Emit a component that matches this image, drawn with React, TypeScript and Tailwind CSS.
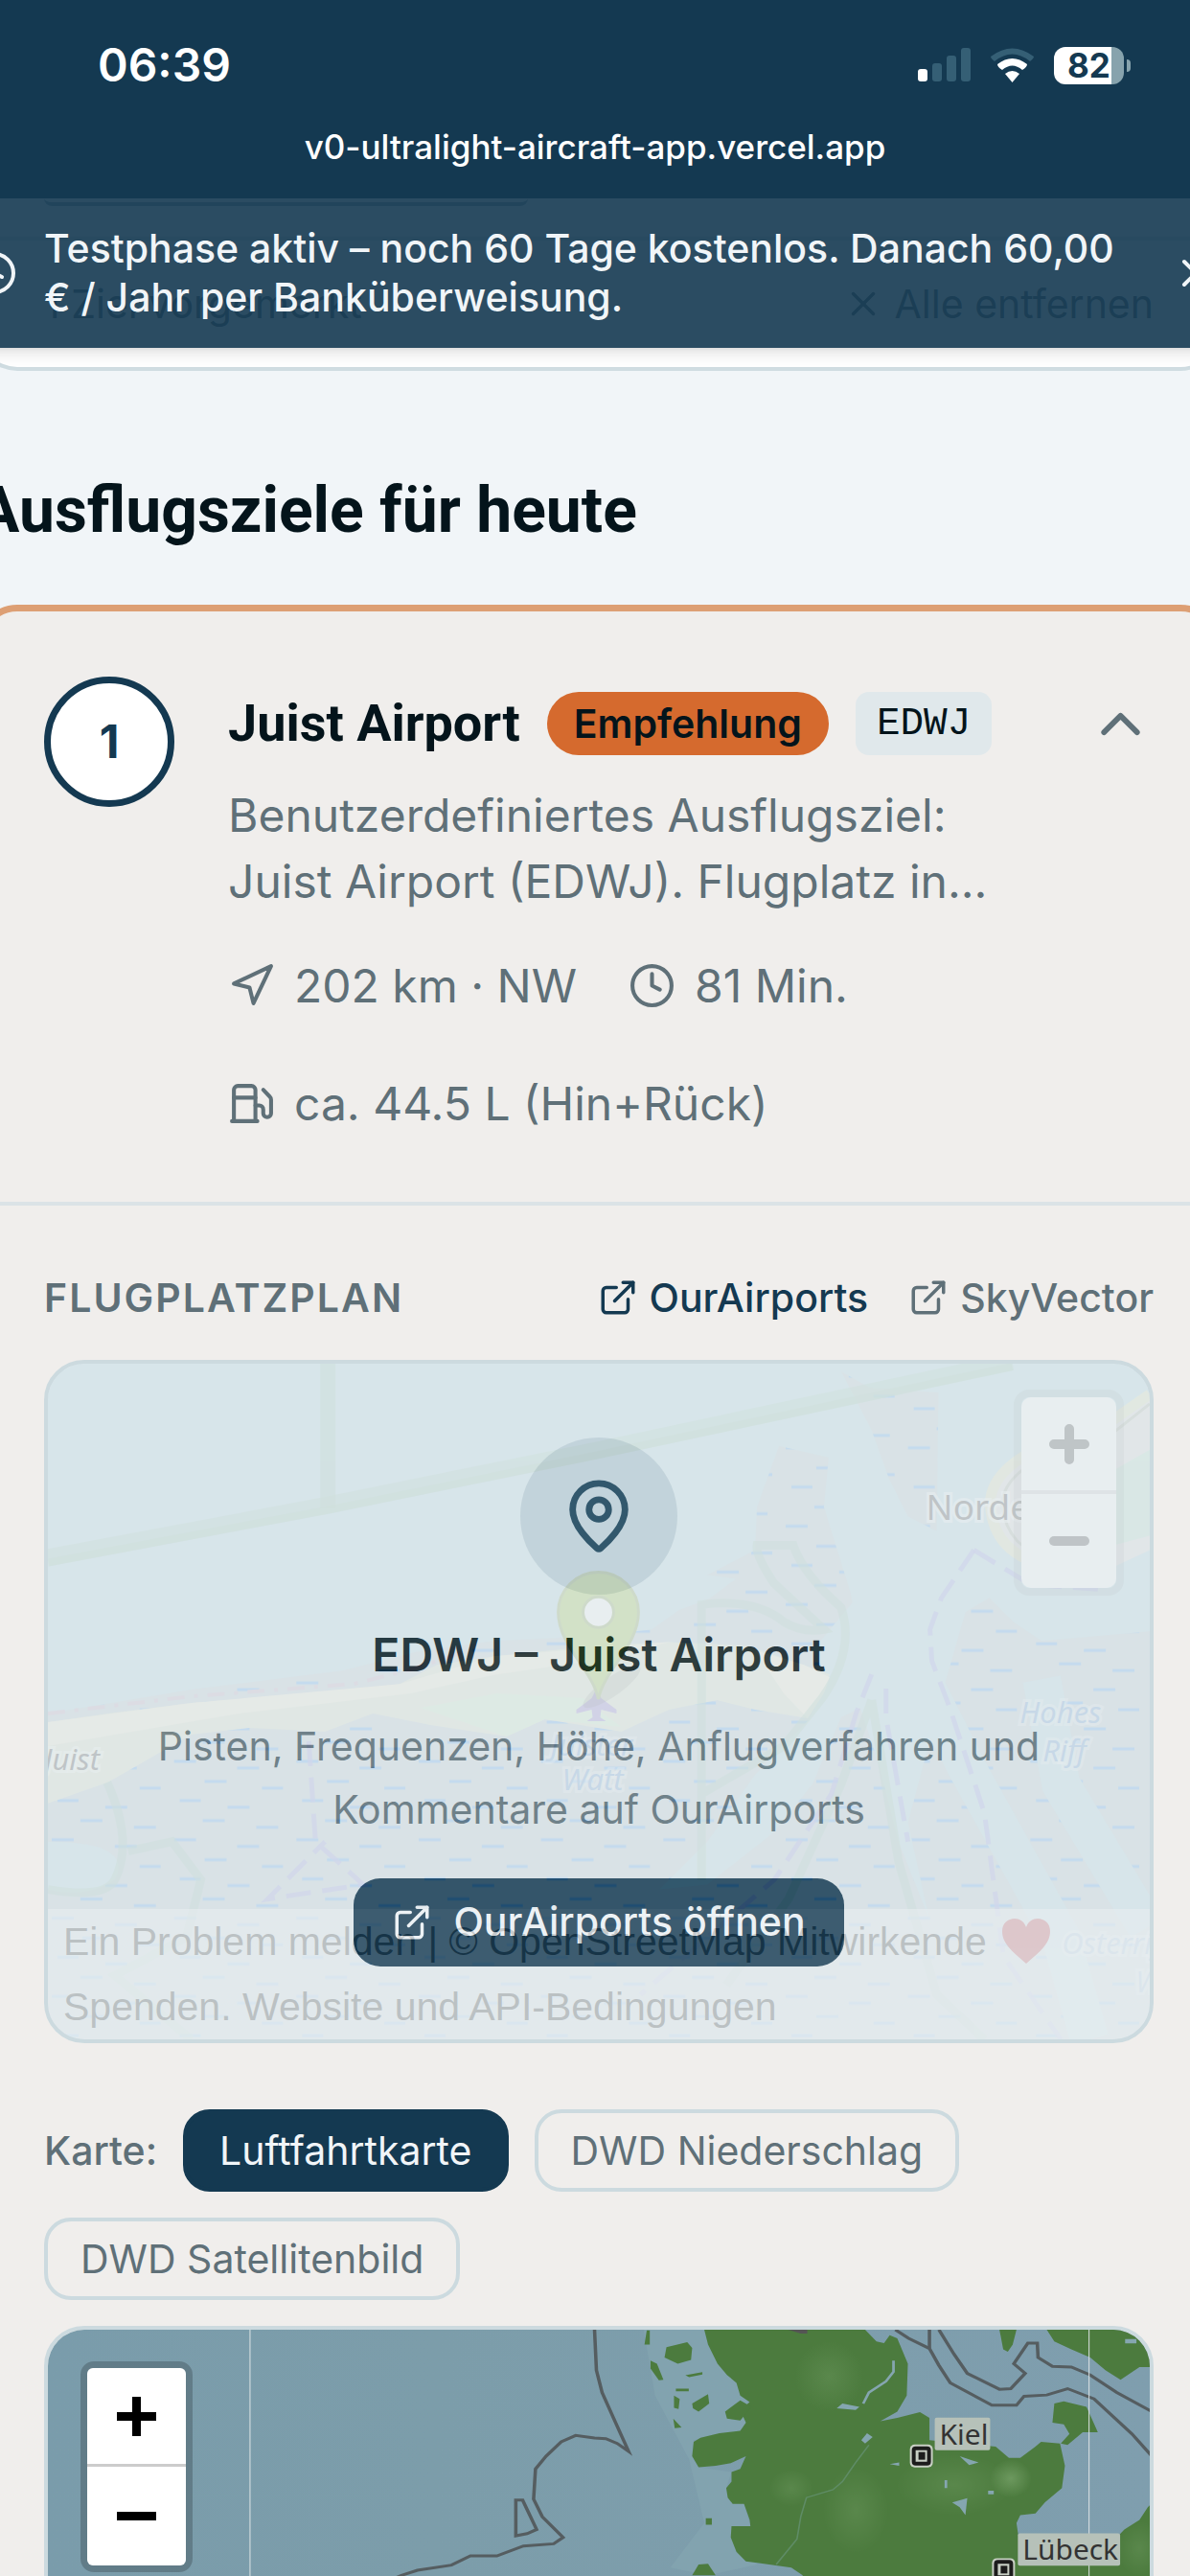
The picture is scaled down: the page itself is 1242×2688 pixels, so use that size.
import { ChevronUp, Clock, ExternalLink, Fuel, MapPin, Navigation, X } from 'lucide-react'

const StatusIcons = () => {
  return (
    <div className="flex items-center gap-5">
      <svg width="55" height="36" viewBox="0 0 55 36" aria-hidden="true">
        <rect x="0" y="22" width="10" height="13" rx="3" fill="#ffffff" />
        <rect x="15" y="16" width="10" height="19" rx="3" fill="#355f75" />
        <rect x="30" y="8" width="10" height="27" rx="3" fill="#355f75" />
        <rect x="45" y="0" width="10" height="35" rx="3" fill="#355f75" />
      </svg>
      <svg width="47" height="36" viewBox="0 0 47 36" aria-hidden="true">
        <path d="M1 9 Q23.500 -8 46 9 Q46 11 42 14 Q23.500 -1 5 14 Q1 11 1 9Z" fill="#355f75" />
        <path d="M8 17 Q23.500 5 39 17 Q39 20 34 23 Q23.500 14 13 23 Q8 20 8 17Z" fill="#ffffff" />
        <path d="M16 27 Q23.500 21 31 27 L23.500 36Z" fill="#ffffff" />
      </svg>
      <div className="flex items-center gap-[3px]">
        <div className="flex h-[39px] w-[73px] items-center justify-center rounded-[12px] bg-linear-to-r from-white from-82% to-[#87a3ad] to-82% text-[35px] leading-none font-bold text-[#143951]">
          82
        </div>
        <div className="h-[13px] w-[4px] rounded-r-full bg-[#87a3ad]" />
      </div>
    </div>
  )
}

const Header = () => {
  return (
    <header className="bg-[#143951] pt-[38px] pb-[34px] text-white">
      <div className="flex h-[60px] items-center justify-between pr-[62px] pl-[102px]">
        <time className="text-[48px] leading-none font-semibold">06:39</time>
        <StatusIcons />
      </div>
      <p className="mt-[35px] text-center text-[35px] leading-[40px] font-medium">
        v0-ultralight-aircraft-app.vercel.app
      </p>
    </header>
  )
}

const TrialBanner = () => {
  return (
    <div className="absolute inset-x-0 top-0 z-10 -mx-[30px] flex items-center gap-7 bg-[#143951]/90 py-[27px] text-[#f1f5f8] shadow-lg">
      <Clock size={48} className="shrink-0" />
      <p className="flex-1 text-[41px] leading-[51px] font-medium">
        Testphase aktiv – noch 60 Tage kostenlos. Danach 60,00
        <br />€ / Jahr per Banküberweisung.
      </p>
      <button type="button" aria-label="Schließen">
        <X size={48} />
      </button>
    </div>
  )
}

const SelectionCard = () => {
  return (
    <div className="-mr-[32px] -ml-[24px] rounded-b-[42px] border-x-4 border-b-4 border-[#cfdce1] bg-white px-[66px] pb-9">
      <div className="h-[8px] w-[505px] rounded-b-[20px] border-b-4 border-[#9db0ba]" />
      <div className="-mx-[66px] mt-8 border-t-4 border-[#dfe7ea]" />
      <div className="mt-9 flex items-center justify-between text-[41px] leading-[60px] text-[#5f7078]">
        <span>1 Ziel vorgemerkt</span>
        <button type="button" className="flex items-center gap-3">
          <X size={42} />
          Alle entfernen
        </button>
      </div>
    </div>
  )
}

// Faded OpenStreetMap tile, drawn at full colour; the parent dims it
const OsmTile = () => {
  return (
    <svg className="h-full w-full" viewBox="0 0 1153 707" preserveAspectRatio="xMidYMin slice" aria-hidden="true">
      <defs>
        <pattern id="flats" width="128" height="82" patternUnits="userSpaceOnUse">
          <rect width="128" height="82" fill="#b2c4ce" />
          <g stroke="#4ba0f5" strokeWidth="3">
            <path d="M4 6h23M70 13h23M36 27h23M96 34h22M10 47h22M60 54h23M34 68h23M90 75h23" />
          </g>
        </pattern>
      </defs>
      <rect width="1153" height="707" fill="#aad3df" />

      <path
        d="M0 366 L150 341 L308 321 L388 301 L467 290 L573 285 L632 278 L660 258 L692 246 L720 225 L690 221 L740 195 L742 150 L765 86 L817 98 L812 150 L840 240 L842 250 L800 300 L818 330 L796 373 L740 430 L690 500 L640 550 L690 545 L760 490 L800 440 L830 370 L850 360 L870 420 L890 500 L930 600 L950 707 L0 707Z"
        fill="url(#flats)"
      />
      <path d="M830 8 L860 25 L932 30 L930 175 L900 160 L880 120 L862 70Z" fill="url(#flats)" />
      <path d="M950 707 L900 480 L940 330 L960 260 L985 245 L1010 270 L1040 290 L1153 280 L1153 707Z" fill="url(#flats)" />
      <path d="M920 340 L960 420 L1060 600 L1090 707 M1040 330 L1060 440 L1150 590" stroke="#aad3df" strokeWidth="40" fill="none" />
      <path d="M0 500 Q90 500 70 540 Q40 560 0 550Z" fill="#aad3df" />

      {/* island */}
      <path
        d="M0 375 L70 365 L150 355 L320 341 L368 335 L407 315 L467 306 L573 295 L652 291 L731 295 L791 315 L818 325 L814 338 L795 371 L740 362 L700 352 L650 362 L600 385 L520 372 L480 390 L400 378 L340 366 L290 385 L210 381 L150 388 L63 438 L0 460Z"
        fill="#d6dfc4"
      />
      <path d="M0 375 L150 355 L368 335 L467 306 L652 291 L560 312 L470 325 L380 345 L200 366 L0 400Z" fill="#f0ead0" />
      <path d="M740 300 L791 315 L818 328 L812 345 L795 371 L770 345Z" fill="#f3eed4" />
      <path d="M390 360 L470 345 L560 350 L600 380 L520 372 L480 390Z" fill="#c9ecc4" />
      <path d="M0 366 L150 348 L320 335 L380 320 L440 300" stroke="#c2a8c0" strokeWidth="4" strokeDasharray="18 10 4 10" fill="none" />

      {/* protected area borders */}
      <g fill="none" stroke="#84b89c">
        <path d="M0 203 L293 148 L573 91 L1009 -2" strokeWidth="18" strokeOpacity=".5" />
        <path d="M0 208 L293 153 L573 96 L1009 3" strokeWidth="8" strokeOpacity=".5" />
        <path d="M293 0 V151" strokeWidth="16" strokeOpacity=".6" />
        <path
          d="M684 540 V252 Q740 245 770 270 Q790 282 812 278 L760 230 Q740 200 742 190 L780 190 Q790 220 830 255 Q845 300 810 350 L770 400 L684 450 M862 352 L830 440 L775 560 L710 650 M862 352 L890 520 L930 660 L980 707 M62 438 Q90 500 70 540 Q60 560 0 550 M84 510 L130 500 L160 540 L145 600 L70 640 L150 707"
          strokeWidth="9"
          strokeOpacity=".55"
        />
      </g>

      {/* ferry routes */}
      <g fill="none" stroke="#8a8ae6" strokeWidth="5" strokeDasharray="26 12" strokeOpacity=".7">
        <path d="M969 195 L1028 231 L1100 236" />
        <path d="M969 195 L935 245 L923 278 L925 311 L943 358 L980 470 L1000 620 L1060 707" />
        <path d="M862 325 L846 365 L820 450 L760 540 L620 660" />
        <path d="M877 340 V370 L900 500" />
        <path d="M273 395 L280 500 L330 545 L230 560 L290 500" />
      </g>

      {/* neighbouring island */}
      <path d="M1153 30 L1110 60 Q1080 80 1048 83 Q985 110 986 148 Q990 200 1048 212 L1110 215 L1153 195Z" fill="#dcd8d8" />
      <path d="M1153 32 L1110 62 Q1080 80 1048 83 Q985 110 986 148 Q990 200 1048 212" fill="none" stroke="#dcdfb4" strokeWidth="11" />
      <path d="M1153 42 L1115 72 Q1000 100 998 148 Q1005 195 1048 202" fill="none" stroke="#a8b0a0" strokeWidth="3" />
      <path d="M1100 120 L1153 90 L1153 180 L1115 190Z" fill="#b4dfc8" />

      <g fontFamily="'Noto Sans', sans-serif" stroke="#ffffff" strokeWidth="6" paintOrder="stroke">
        <text x="919" y="163" fontSize="37" fill="#333333" strokeOpacity=".6">
          Norderney
        </text>
        <g fontStyle="italic" fontSize="31">
          <text x="-4" y="425" fill="#333333" strokeOpacity=".5">
            Juist
          </text>
          <g fill="#5a92d0" strokeOpacity=".4">
            <text x="1017" y="376">
              Hohes
            </text>
            <text x="1041" y="416">
              Riff
            </text>
            <text x="526" y="410">
              Juister
            </text>
            <text x="538" y="446">
              Watt
            </text>
            <text x="1061" y="618">
              Osterriff
            </text>
            <text x="1138" y="658">
              W
            </text>
          </g>
        </g>
      </g>

      <path d="M574 340 L579 350 L595 362 V366 L579 362 L578 370 L584 374 H564 L570 370 L569 362 L553 366 V362 L569 350Z" fill="#8d78cc" />
      <ellipse cx="590" cy="338" rx="36" ry="10" fill="#000000" opacity=".2" transform="rotate(-35 590 338)" />
      <path
        d="M576 351 C570 320 534 295 534 260 A42 42 0 0 1 618 260 C618 295 582 320 576 351Z"
        fill="#93c234"
        stroke="#7fa045"
        strokeWidth="3"
      />
      <circle cx="576" cy="260" r="16" fill="#ffffff" stroke="#7fa045" strokeWidth="3" />
    </svg>
  )
}

const DimmedOsmMap = () => {
  return (
    <div className="pointer-events-none absolute inset-0 opacity-20">
      <OsmTile />
      <div className="absolute top-[27px] right-[27px] rounded-[16px] border-[8px] border-black/15">
        <div className="flex flex-col divide-y-4 divide-[#cccccc] rounded-[10px] bg-white">
          <button type="button" aria-label="Karte vergrößern" className="flex h-[101px] w-[99px] items-center justify-center">
            <svg width="42" height="42" viewBox="0 0 42 42">
              <path d="M5 21h32M21 5v32" stroke="#333333" strokeWidth="10" strokeLinecap="round" />
            </svg>
          </button>
          <button type="button" aria-label="Karte verkleinern" className="flex h-[98px] w-[99px] items-center justify-center">
            <svg width="42" height="42" viewBox="0 0 42 42">
              <path d="M5 21h32" stroke="#333333" strokeWidth="10" strokeLinecap="round" />
            </svg>
          </button>
        </div>
      </div>
      <div className="absolute inset-x-0 bottom-0 bg-white/60 pl-4 text-left font-['Liberation_Sans',sans-serif] text-[41px] leading-[68px] text-[#222222]">
        <p className="flex items-center gap-4">
          Ein Problem melden | © OpenStreetMap Mitwirkende
          <svg width="50" height="48" viewBox="0 0 50 48" aria-hidden="true">
            <path d="M25 47 C10 34 0 26 0 13 C0 5 6 0 13 0 C18 0 23 3 25 9 C27 3 32 0 37 0 C44 0 50 5 50 13 C50 26 40 34 25 47Z" fill="#c8404a" />
          </svg>
        </p>
        <p>Spenden. Website und API-Bedingungen</p>
      </div>
    </div>
  )
}

const AirportPlan = () => {
  return (
    <section className="pt-[66px]">
      <div className="flex items-center justify-between text-[41px] leading-[60px]">
        <h4 className="font-semibold tracking-wider text-[#5f7078]">FLUGPLATZPLAN</h4>
        <div className="flex items-center gap-[42px] font-medium">
          <a href="#ourairports" className="flex items-center gap-3 text-[#143951]">
            <ExternalLink size={42} />
            OurAirports
          </a>
          <a href="#skyvector" className="flex items-center gap-3 text-[#5f7078]">
            <ExternalLink size={42} />
            SkyVector
          </a>
        </div>
      </div>

      <div className="relative mt-[35px] flex h-[713px] flex-col items-center justify-center overflow-hidden rounded-[42px] border-4 border-[#ccdadf] bg-[#e3eaed] text-center">
        <div className="flex h-[164px] w-[164px] items-center justify-center rounded-full bg-[#143951]/12">
          <MapPin size={82} className="text-[#143951]" />
        </div>
        <h5 className="mt-7 text-[48px] leading-[69px] font-semibold text-[#04141b]">EDWJ – Juist Airport</h5>
        <p className="mt-7 max-w-[960px] text-[41px] leading-[66px] text-[#5f7078]">
          Pisten, Frequenzen, Höhe, Anflugverfahren und Kommentare auf OurAirports
        </p>
        <a
          href="#ourairports"
          className="mt-[39px] flex h-[92px] items-center gap-[22px] rounded-[28px] bg-[#143951] px-10 text-[41px] font-medium text-[#f1f5f8]"
        >
          <ExternalLink size={42} />
          OurAirports öffnen
        </a>
        <DimmedOsmMap />
      </div>
    </section>
  )
}

const GermanyChart = () => {
  return (
    <svg className="block h-full w-full" viewBox="0 0 1153 600" preserveAspectRatio="xMidYMin slice" aria-hidden="true">
      <defs>
        <linearGradient id="sea" x1="0" x2="1" y1="0" y2="0">
          <stop offset="0" stopColor="#7a9cab" />
          <stop offset=".35" stopColor="#7c9daa" />
          <stop offset="1" stopColor="#7f9eae" />
        </linearGradient>
        <radialGradient id="hill">
          <stop offset="0" stopColor="#7aa56c" />
          <stop offset="1" stopColor="#7aa56c" stopOpacity="0" />
        </radialGradient>
      </defs>
      <rect width="1153" height="600" fill="url(#sea)" />

      <g transform="translate(572 -31) scale(.396 .3333)">
        <path
          d="M130 93 L290 93 L300 140 L325 200 L375 260 L425 360 L385 410 L262 440 L258 490 L275 525 L362 540 L348 590 L395 640 L412 710 L362 710 L375 790 L430 830 L300 864 L200 840 L290 700 L250 500 L160 300Z"
          fill="#82a3af"
        />
        <g fill="#4c7b3e">
          <path d="M290 93 L300 140 L325 200 L350 235 L375 260 L385 300 L410 320 L385 345 L400 385 L385 410 L330 418 L280 432 L262 445 L258 490 L275 525 L320 520 L360 512 L400 490 L385 530 L362 540 L362 570 L348 590 L352 620 L365 640 L395 640 L410 690 L412 710 L362 710 L360 745 L375 790 L400 820 L430 825 L520 840 L550 864 L550 1800 L1500 1800 L1500 610 L1462 650 L1440 690 L1400 720 L1380 745 L1330 760 L1200 740 L1120 740 L1115 700 L1125 675 L1165 670 L1190 635 L1235 590 L1243 520 L1230 450 L1180 445 L1165 460 L1125 495 L1095 495 L1060 460 L885 440 L885 370 L860 352 L800 370 L755 380 L800 350 L825 300 L828 200 L800 120 L780 110 L765 135 L745 130 L715 93Z" />
          <path d="M1215 325 L1240 318 L1300 335 L1330 415 L1290 415 L1250 455 L1232 450 L1255 420 L1240 390 L1210 385Z" />
          <path d="M1195 93 L1500 93 L1500 210 L1440 210 L1390 250 L1350 220 L1310 180 L1260 155 L1215 130Z" />
          <path d="M1070 93 L1115 93 L1105 140 L1092 162 L1080 155Z" />
          <path d="M190 148 L245 132 L258 150 L255 188 L220 200 L185 180Z" />
          <path d="M148 190 L165 200 L182 250 L170 252 L148 215Z" />
          <path d="M258 325 L300 295 L303 325 L275 350 L260 340Z" />
          <path d="M345 350 L385 315 L415 335 L385 378 L350 372Z" />
          <path d="M210 300 L225 310 L222 342 L210 338Z M208 372 L230 400 L212 402Z M138 95 H146 V140 H132Z" />
          <path d="M215 278 h34 v8 h-34Z M240 236 l45 -10 v8 l-35 8Z M294 685 h16 v20 h-16Z" />
          <path d="M258 864 L275 830 L300 828 L320 864Z" />
        </g>
        <g fill="url(#hill)" opacity=".3">
          <ellipse cx="620" cy="240" rx="90" ry="110" />
          <ellipse cx="520" cy="590" rx="60" ry="60" />
          <ellipse cx="690" cy="660" rx="90" ry="140" />
          <ellipse cx="950" cy="580" rx="160" ry="100" />
          <ellipse cx="1440" cy="780" rx="60" ry="90" />
        </g>
        <ellipse cx="1100" cy="560" rx="55" ry="60" fill="url(#hill)" opacity=".7" />
        <g fill="#85a6b0">
          <path d="M640 340 L655 325 L700 335 L690 345Z M705 440 L720 418 L735 430 L715 450Z M965 490 L1015 510 L990 518Z M945 635 L985 622 L980 675 L965 650Z M780 515 l25 -5 v10Z" />
          <path d="M1402 122 h30 v14 h-30Z M1040 598 h15 v12 h-15Z M925 565 h7 v25 h-7Z" />
        </g>
        <path d="M790 190 V225 L770 255 L725 290 L710 325" fill="none" stroke="#85a6b0" strokeWidth="7" />
        <path d="M725 455 L690 510 L655 570 L630 595 L560 620 L545 680 L535 750 L480 830" fill="none" stroke="#5f8c66" strokeWidth="4" />
        <path d="M512 93 H562 V105 H545Z" fill="#555555" />

        <g fill="none" stroke="#555d60" strokeWidth="9">
          <path d="M0 93 L5 220 L20 290 L50 370 L90 475 L60 450 L30 435 L0 433 L-50 425 L-88 445 L-128 490 L-156 530 L-161 625 L-138 680 L-83 745 L-108 765 L-188 772 L-258 803 L-328 803 L-378 832 L-468 848 L-510 864 L-640 930" />
          <path d="M-208 740 V628 H-190 L-153 720 L-178 733Z" />
          <path d="M795 93 L830 120 L885 152 L910 205 L940 260 L1050 330 L1115 330 L1135 302 L1195 298 L1250 278 L1320 310 L1370 365 L1420 420 L1480 500" />
          <path d="M885 93 V150 M910 93 L950 170 L985 230 L1070 280 L1100 278 L1138 230 L1108 200 L1145 135 L1170 135 L1172 180 L1210 208 L1260 210 L1310 235 L1380 290 L1480 355" />
        </g>
      </g>

      <path d="M211.500 0V600M1089.500 0V600" stroke="#dfe5e6" strokeWidth="1" />

      {[
        { name: 'Kiel', x: 914, y: 132, labelX: 928, labelY: 92, width: 58 },
        { name: 'Lübeck', x: 1000, y: 251, labelX: 1015, labelY: 213, width: 107 },
      ].map((city) => (
        <g key={city.name}>
          <rect x={city.labelX} y={city.labelY} width={city.width} height="34" rx="2" fill="#b6c1b9" />
          <text x={city.labelX + 5} y={city.labelY + 28} fontFamily="'Noto Sans', sans-serif" fontSize="30" fill="#333333">
            {city.name}
          </text>
          <rect x={city.x - 12} y={city.y - 12} width="24" height="24" rx="5" fill="#c8cfc4" />
          <rect x={city.x - 8} y={city.y - 8} width="16" height="16" rx="2" fill="#c8cfc4" stroke="#1c1c1c" strokeWidth="4" />
          <rect x={city.x - 3} y={city.y - 4} width="7" height="8" fill="#1c1c1c" />
        </g>
      ))}
    </svg>
  )
}

const layers = ['Luftfahrtkarte', 'DWD Niederschlag', 'DWD Satellitenbild']

const LayerMap = () => {
  return (
    <section className="mt-[69px]">
      <div className="flex flex-wrap items-center gap-[27px] text-[41px] leading-[60px]">
        <span className="font-medium text-[#5f7078]">Karte:</span>
        {layers.map((layer, i) => (
          <button
            key={layer}
            type="button"
            className={
              i === 0
                ? 'h-[86px] rounded-[28px] border-4 border-[#143951] bg-[#143951] px-[34px] text-[#f1f5f8]'
                : 'h-[86px] rounded-[28px] border-4 border-[#ccdadf] px-[34px] text-[#5f7078]'
            }
          >
            {layer}
          </button>
        ))}
      </div>

      <div className="relative mt-[27px] h-[600px] overflow-hidden rounded-[42px] border-4 border-[#ccdadf]">
        <GermanyChart />
        <div className="absolute top-[33px] left-[34px] rounded-[14px] border-[7px] border-black/20">
          <div className="flex flex-col divide-y-3 divide-[#cccccc] rounded-[6px] bg-white">
            <button type="button" aria-label="Vergrößern" className="flex h-[103px] w-[103px] items-center justify-center">
              <svg width="41" height="41" viewBox="0 0 41 41">
                <path d="M0 20.500h41M20.500 0v41" stroke="#000000" strokeWidth="9" />
              </svg>
            </button>
            <button type="button" aria-label="Verkleinern" className="flex h-[103px] w-[103px] items-center justify-center">
              <svg width="41" height="41" viewBox="0 0 41 41">
                <path d="M0 20.500h41" stroke="#000000" strokeWidth="9" />
              </svg>
            </button>
          </div>
        </div>
      </div>
    </section>
  )
}

const DestinationCard = () => {
  return (
    <article className="-mr-[32px] -ml-[24px] rounded-[42px] border-[7px] border-[#dd9f74] bg-[#f0eeec] px-[63px]">
      <div className="-mx-[63px] flex items-start gap-14 border-b-4 border-[#dbe3e6] px-[63px] pt-[68px] pb-[68px]">
        <div className="flex h-[136px] w-[136px] shrink-0 items-center justify-center rounded-full border-[7px] border-[#143951] bg-white text-[48px] font-bold text-[#143951]">
          1
        </div>
        <div className="min-w-0 flex-1 pt-4">
          <div className="flex items-center gap-7">
            <h3 className="font-['Roboto',sans-serif] text-[54px] leading-[66px] font-bold whitespace-nowrap text-[#04141b]">
              Juist Airport
            </h3>
            <span className="rounded-full bg-[#d56a2e] px-7 text-[41px] leading-[66px] font-semibold text-[#04141b]">
              Empfehlung
            </span>
            <span className="rounded-[14px] bg-[#e0e8eb] px-[22px] font-['Liberation_Mono',monospace] text-[41px] leading-[66px] text-[#04141b]">
              EDWJ
            </span>
          </div>
          <p className="mt-7 text-[48px] leading-[69px] text-[#5f7078]">
            Benutzerdefiniertes Ausflugsziel:
            <br />
            Juist Airport (EDWJ). Flugplatz in...
          </p>
          <div className="mt-10 flex flex-wrap items-center gap-[54px] text-[48px] leading-[69px] text-[#5f7078]">
            <span className="flex items-center gap-5">
              <Navigation size={49} />
              202 km · NW
            </span>
            <span className="flex items-center gap-5">
              <Clock size={49} />
              81 Min.
            </span>
            <span className="flex items-center gap-5">
              <Fuel size={49} />
              ca. 44.5 L (Hin+Rück)
            </span>
          </div>
        </div>
        <button type="button" aria-label="Einklappen" className="pt-[15px] text-[#5f7078]">
          <ChevronUp size={69} />
        </button>
      </div>
      <AirportPlan />
      <LayerMap />
    </article>
  )
}

export default function App() {
  return (
    <div className="h-screen overflow-hidden bg-[#f1f5f8] font-['Inter',sans-serif]">
      <Header />
      <main className="relative overflow-hidden">
        <TrialBanner />
        <SelectionCard />
        <h2 className="mt-[106px] mb-[58px] -ml-[24px] font-['Roboto',sans-serif] text-[66px] leading-[80px] font-bold text-[#04141b]">
          Ausflugsziele für heute
        </h2>
        <DestinationCard />
      </main>
    </div>
  )
}
